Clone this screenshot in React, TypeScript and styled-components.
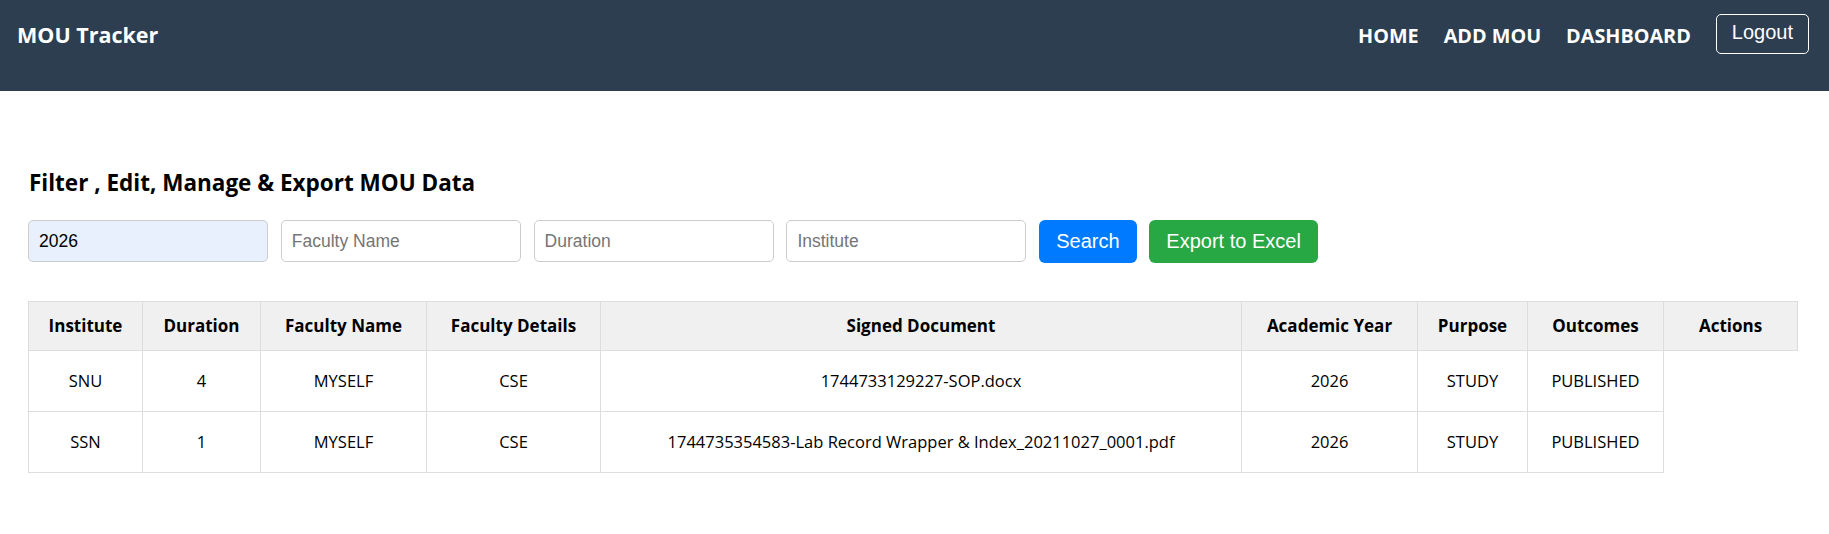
import React from "react";
import styled, { createGlobalStyle } from "styled-components";

const GlobalStyle = createGlobalStyle`
  html, body { margin: 0; padding: 0; background: #ffffff; }
  body { font-family: "Open Sans", "Noto Sans", Arial, sans-serif; color: #000; }
  * { box-sizing: border-box; }
`;

const Navbar = styled.header`
  height: 91px;
  background: #2c3e50;
  display: flex;
  align-items: flex-start;
  justify-content: space-between;
  padding: 14px 20px 0 17px;
`;

const Brand = styled.div`
  height: 40px;
  display: flex;
  align-items: center;
  color: #fff;
  font-weight: 700;
  font-size: 21.5px;
`;

const NavRight = styled.nav`
  display: flex;
  align-items: center;
  gap: 25px;
  height: 40px;
`;

const NavLink = styled.a`
  color: #fff;
  font-weight: 700;
  font-size: 19.8px;
  text-decoration: none;
  padding-top: 2px;
`;

const LogoutButton = styled.button`
  height: 40px;
  padding: 0 15px 3px;
  background: transparent;
  color: #fff;
  border: 1px solid #fff;
  border-radius: 5px;
  font-family: "Liberation Sans", Arial, sans-serif;
  font-size: 20px;
`;

const Main = styled.main`
  padding: 0 32px 0 28px;
`;

const Title = styled.h2`
  margin: 76px 0 0 1px;
  font-size: 22.5px;
  font-weight: 700;
  line-height: normal;
`;

const FilterRow = styled.div`
  display: flex;
  align-items: flex-start;
  gap: 12.8px;
  margin-top: 22px;
`;

const FilterInput = styled.input<{ $filled?: boolean }>`
  width: 240px;
  height: 42px;
  padding: 0 10px;
  border: 1px solid #cccccc;
  border-radius: 5px;
  background: ${(p) => (p.$filled ? "#e8f0fe" : "#ffffff")};
  font-family: "Liberation Sans", Arial, sans-serif;
  font-size: 17.5px;
  color: #000;
  outline: none;
  &::placeholder { color: #757575; }
`;

const ActionButton = styled.button<{ $color: string }>`
  height: 43px;
  padding: 0 17px;
  border: none;
  border-radius: 6px;
  background: ${(p) => p.$color};
  color: #fff;
  font-family: "Liberation Sans", Arial, sans-serif;
  font-size: 20px;
`;

const Table = styled.table`
  margin-top: 38px;
  width: 1769px;
  border-collapse: collapse;
  table-layout: fixed;
`;

const Col = styled.col<{ $w: number }>`
  width: ${(p) => p.$w}px;
`;

const Th = styled.th`
  background: #f0f0f0;
  border: 1px solid #dddddd;
  padding: 12px 4px;
  line-height: 24px;
  font-size: 17px;
  font-weight: 700;
  text-align: center;
`;

const Td = styled.td`
  border: 1px solid #dddddd;
  padding: 18px 4px;
  line-height: 24px;
  font-size: 16.5px;
  text-align: center;
`;

const widths = [114, 118, 166, 174, 641, 176, 110, 136, 134];
const headers = [
  "Institute",
  "Duration",
  "Faculty Name",
  "Faculty Details",
  "Signed Document",
  "Academic Year",
  "Purpose",
  "Outcomes",
  "Actions",
];
const rows = [
  ["SNU", "4", "MYSELF", "CSE", "1744733129227-SOP.docx", "2026", "STUDY", "PUBLISHED"],
  [
    "SSN",
    "1",
    "MYSELF",
    "CSE",
    "1744735354583-Lab Record Wrapper & Index_20211027_0001.pdf",
    "2026",
    "STUDY",
    "PUBLISHED",
  ],
];

export default function App() {
  return (
    <>
      <GlobalStyle />
      <Navbar>
        <Brand>MOU Tracker</Brand>
        <NavRight>
          <NavLink href="#">HOME</NavLink>
          <NavLink href="#">ADD MOU</NavLink>
          <NavLink href="#">DASHBOARD</NavLink>
          <LogoutButton>Logout</LogoutButton>
        </NavRight>
      </Navbar>
      <Main>
        <Title>Filter , Edit, Manage &amp; Export MOU Data</Title>
        <FilterRow>
          <FilterInput $filled defaultValue="2026" />
          <FilterInput placeholder="Faculty Name" />
          <FilterInput placeholder="Duration" />
          <FilterInput placeholder="Institute" />
          <ActionButton $color="#007bff">Search</ActionButton>
          <ActionButton $color="#28a745">Export to Excel</ActionButton>
        </FilterRow>
        <Table>
          <colgroup>
            {widths.map((w, i) => (
              <Col key={i} $w={w} />
            ))}
          </colgroup>
          <thead>
            <tr>
              {headers.map((h) => (
                <Th key={h}>{h}</Th>
              ))}
            </tr>
          </thead>
          <tbody>
            {rows.map((r, i) => (
              <tr key={i}>
                {r.map((c, j) => (
                  <Td key={j}>{c}</Td>
                ))}
              </tr>
            ))}
          </tbody>
        </Table>
      </Main>
    </>
  );
}
